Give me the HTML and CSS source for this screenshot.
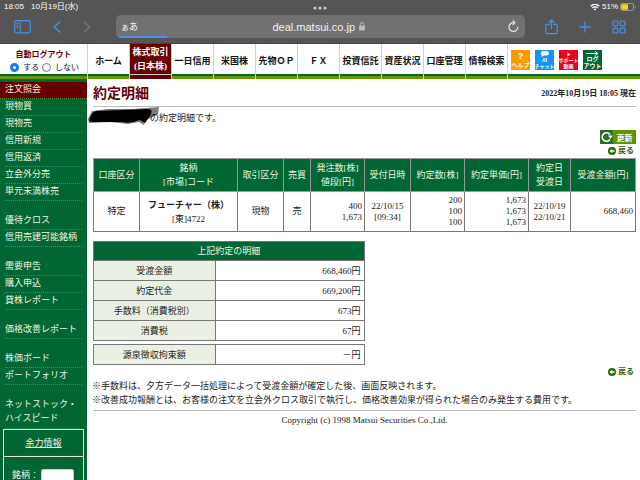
FILE: index.html
```html
<!DOCTYPE html>
<html lang="ja">
<head>
    <meta charset="UTF-8">
    <meta name="viewport" content="width=device-width, initial-scale=1.0">
    <title>約定明細</title>
    <link rel="stylesheet" href="styles.css">
</head>
<body>
    <div class="browser">
        <div class="status-bar">
            <span class="time">18:05</span>
            <span class="date">10月19日(水)</span>
            <svg class="dots" width="14" height="4" viewBox="0 0 14 4" fill="#c8c8c8"><circle cx="2" cy="2" r="1.6"/><circle cx="7" cy="2" r="1.6"/><circle cx="12" cy="2" r="1.6"/></svg>
            <div class="indicators">
                <svg width="10" height="8" viewBox="0 0 10 8" fill="none" stroke="#fff" stroke-width="1.3"><path d="M.7 3.2a6.1 6.1 0 0 1 8.6 0M2.3 5a3.8 3.8 0 0 1 5.4 0"/><path d="M5 7.6 3.7 6.2a1.9 1.9 0 0 1 2.6 0z" fill="#fff" stroke="none"/></svg>
                <span>51%</span>
                <svg width="16" height="8" viewBox="0 0 16 8"><rect x=".5" y=".5" width="13" height="7" rx="2" fill="none" stroke="#999"/><rect x="1.3" y="1.3" width="6.7" height="5.4" rx="1" fill="#fdd21f"/><path d="M14.7 2.8v2.4q1-.3 1-1.2t-1-1.2z" fill="#999"/></svg>
            </div>
        </div>
        <div class="toolbar">
            <div class="tools tools-left">
                <button aria-label="サイドバー"><svg width="17" height="14" viewBox="0 0 17 14" fill="none" stroke="#4a8fe8"><rect x=".7" y=".7" width="15.6" height="12.2" rx="1.8" stroke-width="1.2"/><path d="M6.2 1v12M2.3 3.5h2.2M2.3 5.5h2.2M2.3 7.5h2.2"/></svg></button>
                <button aria-label="戻る"><svg width="8" height="12" viewBox="0 0 8 12" fill="none" stroke="#4a8fe8" stroke-width="1.5" stroke-linecap="round" stroke-linejoin="round"><path d="M6.8 1 1.2 6l5.6 5"/></svg></button>
                <button aria-label="進む"><svg width="8" height="12" viewBox="0 0 8 12" fill="none" stroke="#777" stroke-width="1.4" stroke-linecap="round" stroke-linejoin="round"><path d="M1.2 1 6.8 6l-5.6 5"/></svg></button>
            </div>
            <div class="address-bar">
                <button class="text-size"><small>ぁ</small>あ</button>
                <div class="address">
                    <input type="text" value="deal.matsui.co.jp" aria-label="アドレス">
                    <svg width="6" height="9" viewBox="0 0 6 9"><rect y="3.8" width="6" height="4.8" rx="1" fill="#bbb"/><path d="M1.2 4V2.4a1.8 1.8 0 0 1 3.6 0V4" fill="none" stroke="#bbb"/></svg>
                </div>
                <button class="reload" aria-label="再読み込み"><svg width="11" height="13" viewBox="0 0 11 13" fill="none" stroke="#e6e6e6" stroke-width="1.2" stroke-linecap="round" stroke-linejoin="round"><path d="M9.8 7a4.4 4.4 0 1 1-4.4-4.3h1.2M5 .8l2 1.9L5 4.7"/></svg></button>
                <div class="progress"></div>
            </div>
            <div class="tools tools-right">
                <button aria-label="共有"><svg width="13" height="16" viewBox="0 0 13 16" fill="none" stroke="#4a8fe8" stroke-width="1.2" stroke-linecap="round" stroke-linejoin="round"><path d="M4.3 5.4H1.8q-1 0-1 1v7.2q0 1 1 1h9.4q1 0 1-1V6.4q0-1-1-1H8.7M6.5 10V1M3.9 3.4 6.5.8l2.6 2.6"/></svg></button>
                <button aria-label="新規タブ"><svg width="12" height="12" viewBox="0 0 12 12" stroke="#4a8fe8" stroke-width="1.3" stroke-linecap="round"><path d="M6 1v10M1 6h10"/></svg></button>
                <button aria-label="タブ一覧"><svg width="14" height="14" viewBox="0 0 14 14" fill="none" stroke="#4a8fe8" stroke-width="1.2"><rect x="1" y="1" width="4.8" height="4.8" rx="1"/><rect x="8.2" y="1" width="4.8" height="4.8" rx="1"/><rect x="1" y="8.2" width="4.8" height="4.8" rx="1"/><rect x="8.2" y="8.2" width="4.8" height="4.8" rx="1"/></svg></button>
            </div>
        </div>
    </div>

    <header class="header">
        <div class="auto-logout">
            <div class="auto-logout-title">自動ログアウト</div>
            <div class="auto-logout-options">
                <label><input type="radio" name="logout" checked>する</label>
                <label><input type="radio" name="logout">しない</label>
            </div>
        </div>
        <nav class="main-nav">
            <a href="#">ホーム</a>
            <a href="#" class="active"><span>株式取引<br>(日本株)</span></a>
            <a href="#">一日信用</a>
            <a href="#">米国株</a>
            <a href="#">先物ＯＰ</a>
            <a href="#">ＦＸ</a>
            <a href="#">投資信託</a>
            <a href="#">資産状況</a>
            <a href="#">口座管理</a>
            <a href="#">情報検索</a>
        </nav>
        <div class="shortcuts">
            <a href="#" class="help"><b>?</b><span>ヘルプ</span></a>
            <a href="#" class="chat"><svg width="9" height="6" viewBox="0 0 9 6" fill="#fff"><path d="M3.5 0h3Q9 0 9 2.2T6.5 4.4H4L1.3 6l.5-1.9Q.8 3.5.8 2.3.8 0 3.5 0z"/></svg><span>AI</span><span>チャット</span></a>
            <a href="#" class="support"><svg width="4" height="5" viewBox="0 0 4 5" fill="#fff"><path d="M.5.5v4l3-2z"/></svg><span>サポート</span><span>動画</span></a>
            <a href="#" class="logout"><svg width="13" height="5" viewBox="0 0 13 5" fill="none" stroke="#fff"><path d="M0 2.5h11.5M9 .5l3 2-3 2"/></svg><span>ログ</span><span>アウト</span></a>
        </div>
    </header>

    <div class="content">
        <aside class="sidebar">
            <ul>
                <li class="active"><a href="#">注文照会</a></li>
                <li><a href="#">現物買</a></li>
                <li><a href="#">現物売</a></li>
                <li><a href="#">信用新規</a></li>
                <li><a href="#">信用返済</a></li>
                <li><a href="#">立会外分売</a></li>
                <li><a href="#">単元未満株売</a></li>
            </ul>
            <ul>
                <li><a href="#">優待クロス</a></li>
                <li><a href="#">信用売建可能銘柄</a></li>
            </ul>
            <ul>
                <li><a href="#">需要申告</a></li>
                <li><a href="#">購入申込</a></li>
                <li><a href="#">貸株レポート</a></li>
            </ul>
            <ul>
                <li><a href="#">価格改善レポート</a></li>
            </ul>
            <ul>
                <li><a href="#">株価ボード</a></li>
                <li><a href="#">ポートフォリオ</a></li>
            </ul>
            <ul>
                <li class="two-lines"><a href="#">ネットストック・<br>ハイスピード</a></li>
            </ul>
            <div class="power-box">
                <a href="#" class="power-title">余力情報</a>
                <div class="power-search">
                    <label for="code">銘柄：</label>
                    <input type="text" id="code">
                </div>
            </div>
        </aside>

        <main class="main">
            <div class="title-row">
                <h1>約定明細</h1>
                <div class="timestamp">2022年10月19日 18:05 現在</div>
            </div>
            <div class="customer">
                <svg class="redaction" width="72" height="19" viewBox="0 0 72 19"><path d="M0 12 4 4 20 2 45 2 71 0 70 7 63 11 58 13 56 18 51 15 40 17 22 15 1 16z" fill="#444" opacity=".7"/><path d="M1 14Q3 5 8 4L34 3 60 2Q66 2 62 9L57 16 52 13Q42 17 34 15L4 15z" fill="#000"/></svg>
                の約定明細です。
            </div>
            <div class="actions">
                <button class="refresh"><svg width="13" height="14" viewBox="0 0 13 14"><rect width="13" height="14" fill="#2e7020"/><path d="M10 4.5A4.3 4.3 0 1 0 10 9.5" fill="none" stroke="#fff" stroke-width="1.6"/><path d="M8 5.5h5l-2.5 3.4z" fill="#fff"/></svg><span>更新</span></button>
                <a href="#" class="back"><svg width="8" height="8" viewBox="0 0 8 8"><circle cx="4" cy="4" r="4" fill="#276b08"/><path d="M1.5 4 4.2 1.8v1.5h2.3v1.4H4.2v1.5z" fill="#fff"/></svg>戻る</a>
            </div>

            <table class="orders">
                <colgroup>
                    <col class="w-46"><col class="w-98"><col class="w-46"><col class="w-27"><col class="w-54">
                    <col class="w-46"><col class="w-54"><col class="w-64"><col class="w-42"><col class="w-65">
                </colgroup>
                <thead>
                    <tr>
                        <th>口座区分</th>
                        <th>銘柄<br>[市場]コード</th>
                        <th>取引区分</th>
                        <th>売買</th>
                        <th>発注数[株]<br>値段[円]</th>
                        <th>受付日時</th>
                        <th>約定数[株]</th>
                        <th>約定単価[円]</th>
                        <th>約定日<br>受渡日</th>
                        <th>受渡金額[円]</th>
                    </tr>
                </thead>
                <tbody>
                    <tr>
                        <td>特定</td>
                        <td class="stock"><b>フューチャー（株）</b><br>[東]4722</td>
                        <td>現物</td>
                        <td>売</td>
                        <td class="num">400<br>1,673</td>
                        <td>22/10/15<br>[09:34]</td>
                        <td class="num">200<br>100<br>100</td>
                        <td class="num">1,673<br>1,673<br>1,673</td>
                        <td>22/10/19<br>22/10/21</td>
                        <td class="num">668,460</td>
                    </tr>
                </tbody>
            </table>

            <table class="detail">
                <colgroup><col class="label-col"><col></colgroup>
                <thead>
                    <tr><th colspan="2">上記約定の明細</th></tr>
                </thead>
                <tbody>
                    <tr><th>受渡金額</th><td>668,460円</td></tr>
                    <tr><th>約定代金</th><td>669,200円</td></tr>
                    <tr><th>手数料（消費税別）</th><td>673円</td></tr>
                    <tr><th>消費税</th><td>67円</td></tr>
                </tbody>
            </table>
            <table class="detail withholding">
                <colgroup><col class="label-col"><col></colgroup>
                <tbody>
                    <tr><th>源泉徴収拘束額</th><td>－円</td></tr>
                </tbody>
            </table>

            <div class="actions">
                <a href="#" class="back"><svg width="8" height="8" viewBox="0 0 8 8"><circle cx="4" cy="4" r="4" fill="#276b08"/><path d="M1.5 4 4.2 1.8v1.5h2.3v1.4H4.2v1.5z" fill="#fff"/></svg>戻る</a>
            </div>

            <div class="notes">
                <p>※手数料は、夕方データ一括処理によって受渡金額が確定した後、画面反映されます。</p>
                <p>※改善成功報酬とは、お客様の注文を立会外クロス取引で執行し、価格改善効果が得られた場合のみ発生する費用です。</p>
            </div>
            <footer>Copyright (c) 1998 Matsui Securities Co.,Ltd.</footer>
        </main>
    </div>
</body>
</html>
```

FILE: styles.css
```css
* {
    box-sizing: border-box;
}

body {
    display: flex;
    flex-direction: column;
    height: 100vh;
    margin: 0;
    overflow: hidden;
    background-color: #fff;
    color: #222;
    font-family: "Liberation Serif", "Noto Sans CJK JP", serif;
    font-size: 9px;
    line-height: 14px;
}

a {
    color: inherit;
    text-decoration: none;
}

button {
    display: flex;
    align-items: center;
    padding: 0;
    border: none;
    background: none;
    cursor: pointer;
}

svg {
    display: block;
    flex: none;
}

/* Browser bar */
.browser {
    flex: none;
    background-color: #555;
    border-bottom: 1px solid #444;
    color: #fff;
    font-family: "Liberation Sans", "Noto Sans CJK JP", sans-serif;
}

.status-bar {
    position: relative;
    display: flex;
    align-items: center;
    gap: 7px;
    height: 13px;
    padding: 0 4px;
    font-size: 8px;
    line-height: 13px;
}

.dots {
    position: absolute;
    top: 6px;
    left: 50%;
    transform: translateX(-50%);
}

.indicators {
    display: flex;
    align-items: center;
    gap: 2px;
    margin-left: auto;
}

.toolbar {
    display: flex;
    align-items: center;
    padding: 2px 14px 5px;
}

.tools {
    display: flex;
    align-items: center;
}

.tools-left {
    width: 102px;
    gap: 22px;
}

.tools-right {
    width: 101px;
    gap: 21px;
    padding-left: 20px;
}

.address-bar {
    position: relative;
    display: flex;
    flex: 1;
    align-items: center;
    height: 23px;
    padding: 0 6px 0 5px;
    border-radius: 5px;
    background-color: #717171;
    overflow: hidden;
}

.text-size {
    align-items: baseline;
    width: 17px;
    color: #fff;
    font-family: "Noto Sans CJK JP", sans-serif;
    font-size: 9px;
}

.text-size small {
    font-size: 8px;
}

.address {
    display: flex;
    flex: 1;
    align-items: center;
    justify-content: center;
    gap: 4px;
    padding-right: 10px;
}

.address input {
    width: 84px;
    padding: 0;
    border: none;
    background: none;
    color: #f2f2f2;
    font-family: "Liberation Sans", sans-serif;
    font-size: 11px;
    text-align: right;
}

.progress {
    position: absolute;
    bottom: 0;
    left: 2px;
    width: 12%;
    height: 2px;
    background-color: #4a8fe8;
}

/* Header */
.header {
    display: flex;
    flex: none;
    height: 35px;
    background: linear-gradient(#fff 30px, #006633 30px, #006633 32px, #669900 32px);
    color: #111;
}

.auto-logout {
    width: 88px;
    padding-top: 4px;
    border-right: 1px solid #d0d0d0;
    font-size: 8px;
    line-height: 13px;
    text-align: center;
}

.auto-logout-title {
    color: #660000;
    font-weight: bold;
}

.auto-logout-options {
    display: flex;
    gap: 3px;
    padding-left: 10px;
}

.auto-logout label {
    display: flex;
    align-items: center;
    gap: 4px;
}

.auto-logout input {
    appearance: none;
    width: 9px;
    height: 9px;
    margin: 0;
    border: 1px solid #777;
    border-radius: 50%;
    background-color: #fff;
}

.auto-logout input:checked {
    border: 3px solid #0a7aff;
}

.main-nav {
    display: flex;
    font-weight: bold;
}

.main-nav a {
    display: flex;
    align-items: center;
    justify-content: center;
    width: 42px;
    padding-bottom: 1px;
    border-right: 1px solid #d0d0d0;
    text-align: center;
    white-space: nowrap;
}

.main-nav .active {
    align-items: flex-start;
    padding-top: 1px;
    background: linear-gradient(#660000 30px, #ccc 30px, #ccc 31px, #660000 31px);
    color: #fff;
}

.shortcuts {
    display: flex;
    gap: 5px;
    padding: 6px 0 0 3px;
}

.shortcuts a {
    display: flex;
    flex-direction: column;
    align-items: center;
    justify-content: center;
    width: 19px;
    height: 20px;
    color: #fff;
    font-family: "Liberation Sans", "Noto Sans CJK JP", sans-serif;
    font-size: 5px;
    font-weight: bold;
    line-height: 6px;
    white-space: nowrap;
}

.shortcuts b {
    font-size: 9px;
    line-height: 10px;
}

.shortcuts .help {
    background-color: #ff9900;
    font-size: 6px;
    line-height: 8px;
}

.shortcuts .chat {
    background-color: #1495f5;
}

.shortcuts .support {
    background-color: #e8001c;
}

.shortcuts .logout {
    background-color: #006633;
    font-size: 6px;
    line-height: 7px;
}

/* Sidebar */
.content {
    display: flex;
    flex: 1;
    min-height: 0;
}

.sidebar {
    display: flex;
    flex: none;
    flex-direction: column;
    gap: 12px;
    width: 87px;
    padding-top: 3px;
    background-color: #006633;
    color: #eef6e0;
}

.sidebar ul {
    margin: 0;
    padding: 0 5px;
    list-style: none;
}

.sidebar li {
    height: 17px;
    border-bottom: 1px dotted #5c8c1c;
    line-height: 15px;
    white-space: nowrap;
}

.sidebar .active {
    margin: 0 -5px;
    padding-left: 5px;
    background-color: #660000;
}

.sidebar .two-lines {
    height: auto;
    padding: 0 0 3px;
    line-height: 14px;
}

.power-box {
    flex: 1;
    margin: -12px 3px 0;
    border: 1px solid #dfe9d6;
    border-bottom: none;
}

.power-title {
    display: block;
    border-bottom: 1px solid #dfe9d6;
    line-height: 26px;
    text-align: center;
    text-decoration: underline;
}

.power-search {
    display: flex;
    align-items: flex-start;
    gap: 2px;
    padding: 12px 8px 0;
    line-height: 12px;
}

.power-search input {
    width: 33px;
    height: 14px;
    border: 1px solid #ccc;
    border-radius: 2px;
    background-color: #fff;
}

/* Main */
.main {
    flex: 1;
    padding: 5px 4px 0 6px;
}

.title-row {
    display: flex;
    align-items: center;
    justify-content: space-between;
    padding-bottom: 2px;
    border-bottom: 1px solid #bbb;
}

h1 {
    margin: 0;
    color: #660000;
    font-size: 14px;
    line-height: 20px;
}

.timestamp {
    font-size: 8px;
    font-weight: bold;
}

.customer {
    position: relative;
    padding: 4px 0 0 57px;
}

.redaction {
    position: absolute;
    top: 0;
    left: -5px;
    z-index: -1;
}

.actions {
    display: flex;
    flex-direction: column;
    align-items: flex-end;
}

.refresh {
    width: 36px;
    height: 14px;
    margin-top: 5px;
    background-color: #5f9600;
    color: #fff;
    font-family: "Noto Sans CJK JP", sans-serif;
    font-size: 8px;
    font-weight: bold;
}

.refresh span {
    flex: 1;
}

.back {
    display: flex;
    align-items: center;
    gap: 2px;
    padding-right: 2px;
    color: #33660a;
    font-size: 8px;
    font-weight: bold;
}

.orders,
.detail {
    border-collapse: collapse;
    table-layout: fixed;
}

.orders {
    width: 100%;
    text-align: center;
}

.w-27 { width: 27px; }
.w-42 { width: 42px; }
.w-46 { width: 46px; }
.w-54 { width: 54px; }
.w-64 { width: 64px; }
.w-65 { width: 65px; }
.w-98 { width: 98px; }

.orders th,
.orders td {
    padding: 2px 0;
    border: 1px solid #777;
    white-space: nowrap;
}

.orders th,
.detail thead th {
    background-color: #006633;
    color: #eef6e0;
    font-weight: normal;
}

.orders th {
    border-color: #999;
}

.orders td {
    height: 40px;
    line-height: 11px;
}

.orders .stock {
    line-height: 14px;
}

.orders .num {
    padding-right: 2px;
    text-align: right;
}

.detail {
    width: 50%;
    margin-top: 9px;
}

.label-col {
    width: 45%;
}

.detail th,
.detail td {
    height: 20px;
    padding: 0 3px;
    border: 1px solid #777;
}

.detail thead th {
    height: 19px;
}

.detail tbody th {
    background-color: #eaf1e4;
    font-weight: normal;
}

.detail td {
    text-align: right;
}

.withholding {
    margin-top: 3px;
}

.notes {
    padding-bottom: 3px;
    border-bottom: 1px solid #bbb;
}

.notes p {
    margin: 0 0 0 -1px;
}

footer {
    padding-top: 2px;
    text-align: center;
}
```
